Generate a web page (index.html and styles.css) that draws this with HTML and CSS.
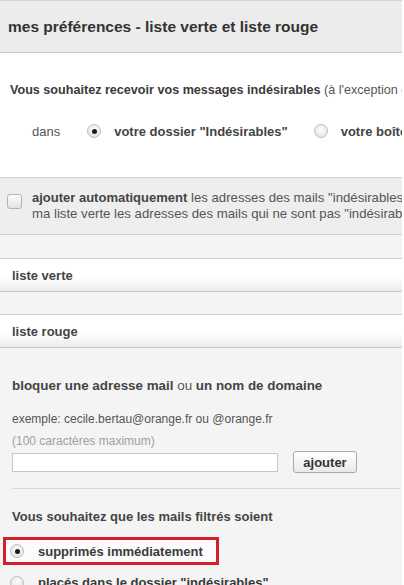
FILE: index.html
```html
<!DOCTYPE html>
<html lang="fr">
<head>
<meta charset="utf-8">
<title>mes préférences</title>
<link rel="stylesheet" href="styles.css">
</head>
<body>
<div class="page">
  <div class="title-bar"><h1>mes préférences - liste verte et liste rouge</h1></div>

  <section class="receive">
    <p class="question"><b>Vous souhaitez recevoir vos messages indésirables</b> (à l'exception des mails de vos contacts)</p>
    <div class="choice-row">
      <span class="dans">dans</span>
      <label class="opt first"><span class="radio checked"></span><b>votre dossier "Indésirables"</b></label>
      <label class="opt"><span class="radio"></span><b>votre boîte de réception</b></label>
    </div>
  </section>

  <section class="auto">
    <span class="checkbox"></span>
    <p><b>ajouter automatiquement</b> les adresses des mails "indésirables" à ma liste rouge et à<br>ma liste verte les adresses des mails qui ne sont pas "indésirables"</p>
  </section>
  <div class="spacer"></div>

  <div class="list-bar">liste verte</div>
  <div class="spacer second"></div>
  <div class="list-bar">liste rouge</div>

  <section class="red-list">
    <p class="block-title"><b>bloquer une adresse mail</b> ou <b>un nom de domaine</b></p>
    <p class="example">exemple: cecile.bertau@orange.fr ou @orange.fr</p>
    <p class="hint">(100 caractères maximum)</p>
    <div class="add-row">
      <input class="addr" type="text">
      <button class="btn">ajouter</button>
    </div>
    <hr class="sep">
    <p class="filtered">Vous souhaitez que les mails filtrés soient</p>
    <div class="highlight">
      <span class="radio checked"></span><b>supprimés immédiatement</b>
    </div>
    <div class="plain-opt">
      <span class="radio"></span><b>placés dans le dossier "indésirables"</b>
    </div>
  </section>
</div>
</body>
</html>
```

FILE: styles.css
```css
html, body {
  margin: 0;
  padding: 0;
  background: #fff;
  overflow: hidden;
}
body {
  font-family: "Liberation Sans", Arial, sans-serif;
  color: #444;
  font-size: 12px;
}
p { margin: 0; }
.page {
  width: 402px;
  overflow: hidden;
}
.title-bar {
  height: 51px;
  background: #ececec;
  border-top: 1px solid #d4d4d4;
  border-bottom: 1px solid #c8c8c8;
  display: flex;
  align-items: center;
  padding-left: 8px;
}
.title-bar h1 {
  margin: 0;
  font-size: 15.5px;
  font-weight: bold;
  color: #333;
  white-space: nowrap;
}
.receive {
  height: 124px;
  padding-top: 29px;
  box-sizing: border-box;
}
.question {
  padding-left: 10px;
  font-size: 12.6px;
  white-space: nowrap;
  line-height: 16px;
  color: #555;
}
.question b { color: #3a3a3a; }
.choice-row {
  display: flex;
  align-items: center;
  margin-top: 25px;
  padding-left: 32px;
  white-space: nowrap;
  font-size: 13px;
  height: 16px;
}
.dans { color: #555; font-size: 13px; margin-right: 27px; }
.opt { display: flex; align-items: center; }
.opt .radio { margin-right: 13px; }
.opt.first { margin-right: 26px; }
.radio {
  display: inline-block;
  flex: none;
  width: 14px;
  height: 14px;
  border-radius: 50%;
  border: 1px solid #bdbdbd;
  background: radial-gradient(circle at 50% 40%, #fdfdfd 0%, #e9e9e9 65%, #d4d4d4 100%);
  box-sizing: border-box;
  position: relative;
}
.radio.checked::after {
  content: "";
  position: absolute;
  left: 3.5px;
  top: 3.5px;
  width: 5px;
  height: 5px;
  border-radius: 50%;
  background: #1a1a1a;
}
.auto {
  background: #eeeeee;
  border-top: 1px solid #d2d2d2;
  border-bottom: 1px solid #d2d2d2;
  height: 58px;
  box-sizing: border-box;
  display: flex;
  align-items: flex-start;
  padding: 15px 0 0 7px;
}
.checkbox {
  flex: none;
  width: 15px;
  height: 15px;
  box-sizing: border-box;
  border: 1px solid #b4b4b4;
  border-radius: 3px;
  background: linear-gradient(#fdfdfd, #e2e2e2);
  margin-top: 1px;
  margin-right: 10px;
}
.auto p {
  margin-top: -3px;
  font-size: 13.2px;
  line-height: 16px;
  white-space: nowrap;
  color: #555;
}
.auto p b { color: #444; font-size: 13px; }
.spacer {
  height: 24px;
  background: #f4f4f4;
  border-bottom: 1px solid #cfcfcf;
  box-sizing: border-box;
}
.spacer.second { height: 23px; }
.list-bar {
  height: 33px;
  background: linear-gradient(#fff 0%, #fff 55%, #ececec 100%);
  border-bottom: 1px solid #cacaca;
  display: flex;
  align-items: center;
  padding-left: 12px;
  font-size: 13px;
  font-weight: bold;
  color: #444;
  box-sizing: border-box;
}
.red-list {
  background: #f4f4f4;
  padding: 30px 0 40px 12px;
}
.block-title {
  font-size: 13.4px;
  line-height: 16px;
  color: #555;
  white-space: nowrap;
}
.block-title b { color: #444; }
.example {
  margin-top: 17px;
  line-height: 16px;
  color: #555;
}
.hint {
  margin-top: 6px;
  line-height: 16px;
  color: #a0a0a0;
}
.add-row {
  display: flex;
  align-items: center;
  margin-top: 2px;
}
.addr {
  width: 266px;
  height: 19px;
  box-sizing: border-box;
  border: 1px solid #c6c6c6;
  background: #fff;
  margin: 0;
  padding: 0;
}
.btn {
  margin-left: 15px;
  width: 64px;
  height: 22px;
  border: 1px solid #a9a9a9;
  border-radius: 3px;
  background: linear-gradient(#ffffff, #e9e9e9);
  font-family: "Liberation Sans", Arial, sans-serif;
  font-size: 13px;
  font-weight: bold;
  color: #333;
  padding: 0;
}
.sep {
  border: 0;
  border-top: 1px solid #d8d8d8;
  margin: 15px 2px 0 0;
}
.filtered {
  margin-top: 20px;
  font-size: 13px;
  line-height: 16px;
  color: #444;
  font-weight: bold;
  white-space: nowrap;
}
.highlight {
  margin-left: -9px;
  margin-top: 12px;
  width: 216px;
  height: 28px;
  box-sizing: border-box;
  border: 3px solid #d51f2c;
  background: #fbfbfb;
  display: flex;
  align-items: center;
  padding-left: 4px;
  font-size: 13px;
  color: #3a3a3a;
  white-space: nowrap;
}
.highlight .radio, .plain-opt .radio { margin-right: 14px; }
.plain-opt {
  display: flex;
  align-items: center;
  margin-top: 10px;
  margin-left: -2px;
  font-size: 13px;
  color: #3a3a3a;
  white-space: nowrap;
}
```
